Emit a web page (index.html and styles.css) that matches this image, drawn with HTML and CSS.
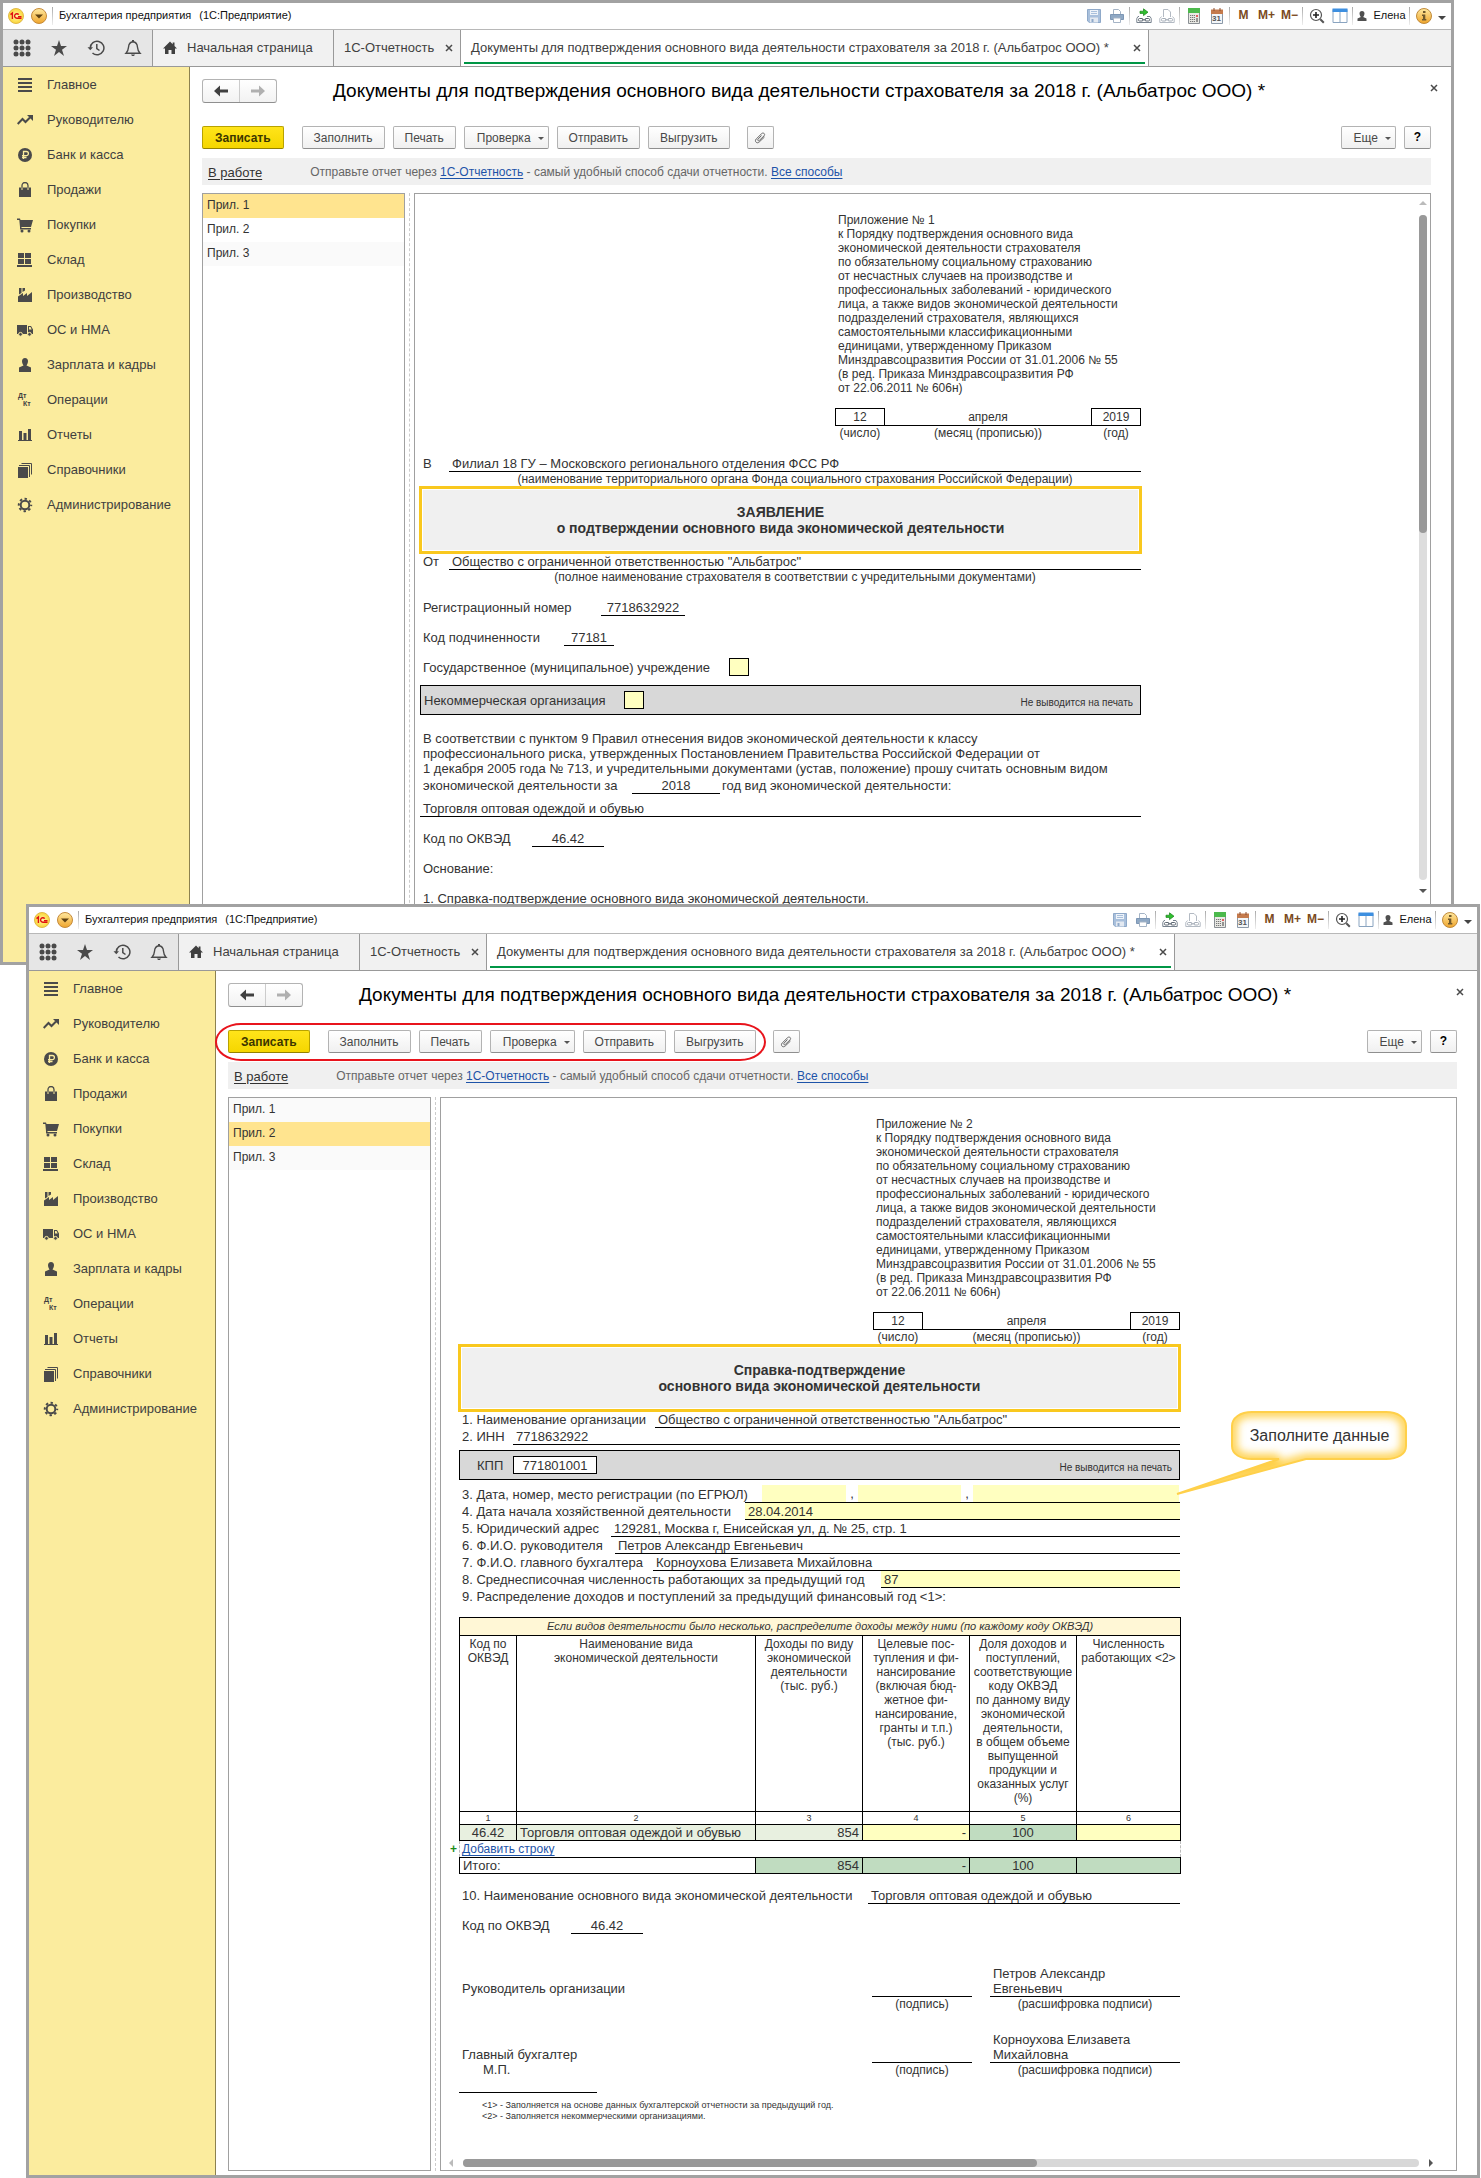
FILE: index.html
```html
<!DOCTYPE html>
<html lang="ru">
<head>
<meta charset="utf-8">
<title>Бухгалтерия предприятия</title>
<link rel="stylesheet" href="styles.css">
</head>
<body>
<svg class="sprite" aria-hidden="true">
  <defs>
    <linearGradient id="gold" x1="0" y1="0" x2="0" y2="1"><stop offset="0" stop-color="#ffe9a0"/><stop offset="1" stop-color="#efa52c"/></linearGradient>
    <radialGradient id="sun"><stop offset="0" stop-color="#fff9a8"/><stop offset="1" stop-color="#fbd536"/></radialGradient>
  </defs>
  <symbol id="i-logo" viewBox="0 0 16 16"><circle cx="8" cy="8" r="7.5" fill="url(#sun)" stroke="#e0b94a"/><path d="M2.5 6.6 4.4 5v6M10.7 6.6A2.3 2.3 0 1 0 8.9 10.3H13.5M10 8.6H13.5M8.9 10.3" fill="none" stroke="#e01010" stroke-width="1.4"/></symbol>
  <symbol id="i-drop" viewBox="0 0 16 16"><circle cx="8" cy="8" r="7.5" fill="url(#gold)" stroke="#c58a3a"/><path d="M4 6.5h8L8 10.5z" fill="#5f4212"/></symbol>
  <symbol id="i-grid" viewBox="0 0 18 18"><g fill="#4a4a4a"><circle cx="3" cy="3" r="2.5"/><circle cx="9" cy="3" r="2.5"/><circle cx="15" cy="3" r="2.5"/><circle cx="3" cy="9" r="2.5"/><circle cx="9" cy="9" r="2.5"/><circle cx="15" cy="9" r="2.5"/><circle cx="3" cy="15" r="2.5"/><circle cx="9" cy="15" r="2.5"/><circle cx="15" cy="15" r="2.5"/></g></symbol>
  <symbol id="i-star" viewBox="0 0 18 18"><path d="M9 1l2 6h6l-5 3.700 2 6.300-5-3.900-5 3.900 2-6.300L1 7h6z" fill="#4a4a4a"/></symbol>
  <symbol id="i-hist" viewBox="0 0 18 18"><path d="M3.300 9a6.800 6.800 0 1 1 2.200 5M9.800 5v4.500l2.700 2" fill="none" stroke="#4a4a4a" stroke-width="1.500"/><path d="M.5 8.300h5.500L3.300 11.300z" fill="#4a4a4a"/></symbol>
  <symbol id="i-bell" viewBox="0 0 18 18"><path d="M2 14.200c2-2 2.300-3.500 2.500-6C4.700 5 6 3 9 2.700 12 3 13.300 5 13.500 8.200c.2 2.500.5 4 2.500 6z" fill="none" stroke="#4a4a4a" stroke-width="1.400"/><path d="M8 1h2v2H8zM7 15.500h4l-1 1.500H8z" fill="#4a4a4a"/></symbol>
  <symbol id="i-home" viewBox="0 0 14 14"><path d="M7 .5 0 7.500h2V13h3.500V9h3v4H12V7.500h2L11.500 5V1.500h-1.800v1.700z" fill="#404040"/></symbol>
  <symbol id="i-x" viewBox="0 0 8 8"><path d="M1 1l6 6M7 1 1 7" stroke="#4a4a4a" stroke-width="1.500"/></symbol>
  <symbol id="i-save" viewBox="0 0 16 16"><path d="M1.500 1.500h13v13h-11l-2-1.500z" fill="#a9c0dc" stroke="#8fa9c9"/><path d="M4 2h8v5H4z" fill="#eef3f9"/><path d="M5 3.500h6M5 5.500h6" stroke="#a9c0dc"/><path d="M4 9.500h8v5H4z" fill="#e3e9f1"/><path d="M5.500 11h2v3h-2z" fill="#8fa9c9"/></symbol>
  <symbol id="i-print" viewBox="0 0 16 16"><path d="M4.500 7V1.500h5l2 2V7" fill="#fff" stroke="#a5b4c6"/><path d="M1.500 6.500h13v5h-13z" fill="#8fa8c4" stroke="#7d97b5"/><path d="M4.500 10h7v4.500h-7z" fill="#fff" stroke="#a5b4c6"/></symbol>
  <symbol id="i-link" viewBox="0 0 16 16"><path d="M4 3.200h3.500V.8L12 4.200 7.500 7.600V5.400H4z" fill="#2fc02f" stroke="#178017" stroke-width=".7"/><path d="M3 8.500H2L.8 10.500V14.500h14.400V10.500L14 8.500h-3" fill="none" stroke="#77828e"/><rect x="2.500" y="10.500" width="4.500" height="2.500" rx="1" fill="none" stroke="#5d6772"/><rect x="9" y="10.500" width="4.500" height="2.500" rx="1" fill="none" stroke="#5d6772"/><path d="M6 11.800h4" stroke="#5d6772"/></symbol>
  <symbol id="i-plink" viewBox="0 0 16 16"><path d="M4.500 9V1.500h4.500l2.500 2.500V9M2.500 8.500.8 10.500v4h14.400v-4L13.500 8.500" fill="none" stroke="#b3bac3"/><rect x="2.500" y="10.500" width="4.500" height="2.500" rx="1" fill="none" stroke="#a5adb7"/><rect x="9" y="10.500" width="4.500" height="2.500" rx="1" fill="none" stroke="#a5adb7"/><path d="M6 11.800h4" stroke="#a5adb7"/></symbol>
  <symbol id="i-calc" viewBox="0 0 16 16"><path d="M2.500.5h11v15h-11z" fill="#e9e9e4" stroke="#8a8f94"/><path d="M2 0h12v5H2z" fill="#4cb94c"/><path d="M4 7.500h5M4 9.500h5M4 11.500h5M4 13.500h5" stroke="#777" stroke-dasharray="1.300 .7"/><path d="M11 7v2" stroke="#e03030" stroke-width="1.500"/><path d="M11 10v4" stroke="#777" stroke-width="1.500"/></symbol>
  <symbol id="i-cal" viewBox="0 0 16 16"><path d="M2.500 2.500h11v13h-11z" fill="#f3f6f8" stroke="#8c99a8"/><path d="M2 1.500h12V6H2z" fill="#c47a4c"/><path d="M5 0v3M11 0v3" stroke="#8c4c2c"/></symbol>
  <symbol id="i-zoom" viewBox="0 0 16 16"><circle cx="7" cy="7" r="5.500" fill="#fff" stroke="#555" stroke-width="1.200"/><path d="M7 4v6M4 7h6" stroke="#222" stroke-width="1.600"/><path d="m11.300 11.300 3.500 3.500" stroke="#555" stroke-width="2"/></symbol>
  <symbol id="i-cols" viewBox="0 0 16 16"><path d="M1 1.500h14v13H1z" fill="#fff" stroke="#8aa4c0"/><path d="M.5.500h15V4H.5z" fill="#3d8fe0"/><path d="M8 4v10.500" stroke="#8aa4c0"/></symbol>
  <symbol id="i-user" viewBox="0 0 10 10"><path d="M5 0c1.700 0 2.500 1 2.500 2.500S6.500 5.500 6.200 6L9.500 7.500V10h-9V7.500L3.800 6C3.500 5.500 2.500 4 2.500 2.500S3.300 0 5 0z" fill="#505050"/></symbol>
  <symbol id="i-info" viewBox="0 0 16 16"><circle cx="8" cy="8" r="7.500" fill="url(#gold)" stroke="#c08a3a"/><path d="M7 3h2.500v2H7zM6 6.500h3.300V11h1v1.500H6V11h1V8H6z" fill="#70592c"/></symbol>
  <symbol id="i-caret" viewBox="0 0 8 4"><path d="M0 0h8L4 4z" fill="#444"/></symbol>
  <symbol id="i-back" viewBox="0 0 14 12"><path d="M0 6l6-5.500v4h8v3H6v4z" fill="#404040"/></symbol>
  <symbol id="i-fwd" viewBox="0 0 14 12"><path d="M14 6 8 .500v4H0v3h8v4z" fill="#b0b0b0"/></symbol>
  <symbol id="i-clip" viewBox="0 0 12 12"><path d="M7.500 3.500 4 7.200c-.9 1 .3 2.200 1.300 1.200L10 3.900c1.700-1.700-.6-3.900-2.300-2.300L2.200 7c-2.200 2.300.8 5.200 3 3L10.500 5" fill="none" stroke="#666" stroke-width="1"/></symbol>
  <symbol id="n-main" viewBox="0 0 16 16"><path d="M1 2h14M1 6h14M1 10h14M1 14h14" stroke="#4a4a4a" stroke-width="2"/></symbol>
  <symbol id="n-trend" viewBox="0 0 16 16"><path d="M.7 12 5.500 7l3 3 4.500-4.500" fill="none" stroke="#4a4a4a" stroke-width="2"/><path d="M10 3h6v6z" fill="#4a4a4a"/></symbol>
  <symbol id="n-rub" viewBox="0 0 16 16"><circle cx="8" cy="8" r="7" fill="#4a4a4a"/><path d="M6.500 12V4.500h2.800a2 2 0 0 1 0 4.200H5M5 10.500h4.500" fill="none" stroke="#fbec9e" stroke-width="1.300"/></symbol>
  <symbol id="n-bag" viewBox="0 0 16 16"><path d="M2 5.500h12V15H2z" fill="#4a4a4a"/><path d="M5 8V3.500a3 3 0 0 1 6 0V8" fill="none" stroke="#4a4a4a" stroke-width="1.300"/><path d="M5 5.500V8M11 5.500V8" stroke="#fbec9e"/></symbol>
  <symbol id="n-cart" viewBox="0 0 16 16"><path d="M0 1.500h3l.5 1.500H16l-2 7H4.500v1H14v1.500H3V10L2.300 3H0z" fill="#4a4a4a"/><circle cx="5" cy="14" r="1.500" fill="#4a4a4a"/><circle cx="12" cy="14" r="1.500" fill="#4a4a4a"/></symbol>
  <symbol id="n-store" viewBox="0 0 16 16"><path d="M1 1h6v5H1zM8 1h6v5H8zM1 7h6v5H1zM8 7h6v5H8zM0 13h15v2H0z" fill="#4a4a4a"/></symbol>
  <symbol id="n-fact" viewBox="0 0 16 16"><path d="M1 15V9.500L6 6v3l4-3v3l5-4v10zM2 1h2.500v5L2 7.500zM5.500 1H8v2.500L5.500 5z" fill="#4a4a4a"/></symbol>
  <symbol id="n-truck" viewBox="0 0 16 16"><path d="M0 3h10v9H0zM11 4h3l2 3.500V12h-5z" fill="#4a4a4a"/><path d="M12 5h1.500l1.200 2.500H12z" fill="#fbec9e"/><circle cx="3.500" cy="12.300" r="1.900" fill="#4a4a4a" stroke="#fbec9e"/><circle cx="12.500" cy="12.300" r="1.900" fill="#4a4a4a" stroke="#fbec9e"/></symbol>
  <symbol id="n-man" viewBox="0 0 16 16"><path d="M8 1c2 0 3 1.500 3 3.300S10 8 9.500 8.500l4.500 2V15H2v-4.500l4.500-2C6 8 5 6.100 5 4.300S6 1 8 1z" fill="#4a4a4a"/></symbol>
  <symbol id="n-bars" viewBox="0 0 16 16"><path d="M2 4h3v9H2zM6.500 6h3v7h-3zM11 2h3v11h-3zM1 13h14v1H1z" fill="#4a4a4a"/></symbol>
  <symbol id="n-books" viewBox="0 0 16 16"><path d="M1 5h10v11H1z" fill="#4a4a4a"/><path d="M2 3.500h10.500V15M4.500 1.500h10V12.500" fill="none" stroke="#4a4a4a"/></symbol>
  <symbol id="n-gear" viewBox="0 0 16 16"><circle cx="8" cy="8" r="4.300" fill="none" stroke="#4a4a4a" stroke-width="2"/><circle cx="8" cy="8" r="6.200" fill="none" stroke="#4a4a4a" stroke-width="2" stroke-dasharray="2.400 2.470" stroke-dashoffset="1.200"/></symbol>
</svg>

<div class="desktop">
  <section class="window window-back">
    <header class="titlebar">
      <svg class="ic16"><use href="#i-logo"/></svg>
      <svg class="ic16 drop"><use href="#i-drop"/></svg>
      <i class="sep"></i>
      <span class="app-name">Бухгалтерия предприятия</span><span>(1С:Предприятие)</span>
      <div class="sys">
        <button aria-label="Сохранить"><svg class="ic16"><use href="#i-save"/></svg></button>
        <button aria-label="Печать"><svg class="ic16"><use href="#i-print"/></svg></button>
        <i class="sep"></i>
        <button aria-label="Получить ссылку"><svg class="ic16"><use href="#i-link"/></svg></button>
        <button aria-label="Перейти по ссылке"><svg class="ic16"><use href="#i-plink"/></svg></button>
        <i class="sep"></i>
        <button aria-label="Калькулятор"><svg class="ic16"><use href="#i-calc"/></svg></button>
        <button class="cal" aria-label="Календарь"><svg class="ic16"><use href="#i-cal"/></svg><span>31</span></button>
        <i class="sep"></i>
        <button class="mem">M</button><button class="mem">M+</button><button class="mem">M−</button>
        <i class="sep"></i>
        <button aria-label="Масштаб"><svg class="ic16"><use href="#i-zoom"/></svg></button>
        <button aria-label="Панели"><svg class="ic16"><use href="#i-cols"/></svg></button>
        <i class="sep"></i>
        <button class="user"><svg class="ic10"><use href="#i-user"/></svg>Елена</button>
        <i class="sep"></i>
        <button aria-label="Справка"><svg class="ic16"><use href="#i-info"/></svg></button>
        <button class="more" aria-label="Меню"><svg><use href="#i-caret"/></svg></button>
      </div>
    </header>
    <nav class="tabs">
      <div class="quick">
        <button aria-label="Меню функций"><svg class="ic18"><use href="#i-grid"/></svg></button>
        <button aria-label="Избранное"><svg class="ic18"><use href="#i-star"/></svg></button>
        <button aria-label="История"><svg class="ic18"><use href="#i-hist"/></svg></button>
        <button aria-label="Оповещения"><svg class="ic18"><use href="#i-bell"/></svg></button>
      </div>
      <a href="#" class="tab tab-home"><svg class="ic14"><use href="#i-home"/></svg>Начальная страница</a>
      <a href="#" class="tab">1С-Отчетность<svg class="ic8"><use href="#i-x"/></svg></a>
      <a href="#" class="tab active">Документы для подтверждения основного вида деятельности страхователя за 2018 г. (Альбатрос ООО) *<svg class="ic8"><use href="#i-x"/></svg></a>
    </nav>
    <div class="body">
      <nav class="side">
        <a href="#"><svg class="ic16"><use href="#n-main"/></svg>Главное</a>
        <a href="#"><svg class="ic16"><use href="#n-trend"/></svg>Руководителю</a>
        <a href="#"><svg class="ic16"><use href="#n-rub"/></svg>Банк и касса</a>
        <a href="#"><svg class="ic16"><use href="#n-bag"/></svg>Продажи</a>
        <a href="#"><svg class="ic16"><use href="#n-cart"/></svg>Покупки</a>
        <a href="#"><svg class="ic16"><use href="#n-store"/></svg>Склад</a>
        <a href="#"><svg class="ic16"><use href="#n-fact"/></svg>Производство</a>
        <a href="#"><svg class="ic16"><use href="#n-truck"/></svg>ОС и НМА</a>
        <a href="#"><svg class="ic16"><use href="#n-man"/></svg>Зарплата и кадры</a>
        <a href="#"><span class="ops"><span>Дт</span><span>Кт</span></span>Операции</a>
        <a href="#"><svg class="ic16"><use href="#n-bars"/></svg>Отчеты</a>
        <a href="#"><svg class="ic16"><use href="#n-books"/></svg>Справочники</a>
        <a href="#"><svg class="ic16"><use href="#n-gear"/></svg>Администрирование</a>
      </nav>
      <main class="main">
        <div class="heading">
          <div class="history"><button aria-label="Назад"><svg><use href="#i-back"/></svg></button><button aria-label="Вперед"><svg><use href="#i-fwd"/></svg></button></div>
          <h1>Документы для подтверждения основного вида деятельности страхователя за 2018 г. (Альбатрос ООО) *</h1>
          <button class="close" aria-label="Закрыть"><svg class="ic8"><use href="#i-x"/></svg></button>
        </div>
        <div class="toolbar">
          <div class="actions">
            <button class="btn primary">Записать</button>
            <button class="btn">Заполнить</button>
            <button class="btn">Печать</button>
            <button class="btn menu">Проверка<i></i></button>
            <button class="btn">Отправить</button>
            <button class="btn">Выгрузить</button>
          </div>
          <button class="btn square" aria-label="Присоединенные файлы"><svg class="ic12"><use href="#i-clip"/></svg></button>
          <button class="btn menu push">Еще<i></i></button>
          <button class="btn square help">?</button>
        </div>
        <div class="notice"><a href="#" class="state">В работе</a><p>Отправьте отчет через <a href="#">1С-Отчетность</a> - самый удобный способ сдачи отчетности. <a href="#">Все способы</a></p></div>
        <div class="panes">
          <ul class="list"><li class="sel">Прил. 1</li><li>Прил. 2</li><li class="alt">Прил. 3</li></ul>
          <div class="splitter"></div>
          <div class="sheet sheet-v">
            <div class="doc">
              <div class="form">
                <div class="approval">
                  <p>Приложение № 1<br>к Порядку подтверждения основного вида<br>экономической деятельности страхователя<br>по обязательному социальному страхованию<br>от несчастных случаев на производстве и<br>профессиональных заболеваний - юридического<br>лица, а также видов экономической деятельности<br>подразделений страхователя, являющихся<br>самостоятельными классификационными<br>единицами, утвержденному Приказом<br>Минздравсоцразвития России от 31.01.2006 № 55<br>(в ред. Приказа Минздравсоцразвития РФ<br>от 22.06.2011 № 606н)</p>
                  <div class="date"><b>12</b><span>апреля</span><b>2019</b><small>(число)</small><small>(месяц (прописью))</small><small>(год)</small></div>
                </div>
                <div class="row to"><span class="l-short">В</span><span class="val">Филиал 18 ГУ – Московского регионального отделения ФСС РФ</span></div>
                <div class="hint">(наименование территориального органа Фонда социального страхования Российской Федерации)</div>
                <h2>ЗАЯВЛЕНИЕ<br>о подтверждении основного вида экономической деятельности</h2>
                <div class="row r16"><span class="l-short">От</span><span class="val">Общество с ограниченной ответственностью "Альбатрос"</span></div>
                <div class="hint">(полное наименование страхователя в соответствии с учредительными документами)</div>
                <div class="row r30 first"><span class="l-reg">Регистрационный номер</span><span class="val mid w84">7718632922</span></div>
                <div class="row r30"><span class="l-sub">Код подчиненности</span><span class="val mid w50">77181</span></div>
                <div class="row r30"><label class="l-gov" for="gov">Государственное (муниципальное) учреждение</label><input type="checkbox" id="gov"></div>
                <div class="gray"><label class="l-npo" for="npo">Некоммерческая организация</label><input type="checkbox" id="npo"><small>Не выводится на печать</small></div>
                <p class="para">В соответствии с пунктом 9 Правил отнесения видов экономической деятельности к классу<br>профессионального риска, утвержденных Постановлением Правительства Российской Федерации от<br>1 декабря 2005 года № 713, и учредительными документами (устав, положение) прошу считать основным видом</p>
                <div class="row r18"><span class="l-for">экономической деятельности за</span><span class="val mid w88">2018</span><span class="tail">год вид экономической деятельности:</span></div>
                <div class="row r23"><span class="val">Торговля оптовая одеждой и обувью</span></div>
                <div class="row r30"><span class="l-code">Код по ОКВЭД</span><span class="val mid w72">46.42</span></div>
                <div class="row r30"><span>Основание:</span></div>
                <div class="row r30"><span>1. Справка-подтверждение основного вида экономической деятельности.</span></div>
              </div>
            </div>
            <div class="vscroll"><i class="up"></i><div class="track"><div class="thumb"></div></div><i class="down"></i></div>
          </div>
        </div>
      </main>
    </div>
  </section>

  <section class="window window-front">
    <header class="titlebar">
      <svg class="ic16"><use href="#i-logo"/></svg>
      <svg class="ic16 drop"><use href="#i-drop"/></svg>
      <i class="sep"></i>
      <span class="app-name">Бухгалтерия предприятия</span><span>(1С:Предприятие)</span>
      <div class="sys">
        <button aria-label="Сохранить"><svg class="ic16"><use href="#i-save"/></svg></button>
        <button aria-label="Печать"><svg class="ic16"><use href="#i-print"/></svg></button>
        <i class="sep"></i>
        <button aria-label="Получить ссылку"><svg class="ic16"><use href="#i-link"/></svg></button>
        <button aria-label="Перейти по ссылке"><svg class="ic16"><use href="#i-plink"/></svg></button>
        <i class="sep"></i>
        <button aria-label="Калькулятор"><svg class="ic16"><use href="#i-calc"/></svg></button>
        <button class="cal" aria-label="Календарь"><svg class="ic16"><use href="#i-cal"/></svg><span>31</span></button>
        <i class="sep"></i>
        <button class="mem">M</button><button class="mem">M+</button><button class="mem">M−</button>
        <i class="sep"></i>
        <button aria-label="Масштаб"><svg class="ic16"><use href="#i-zoom"/></svg></button>
        <button aria-label="Панели"><svg class="ic16"><use href="#i-cols"/></svg></button>
        <i class="sep"></i>
        <button class="user"><svg class="ic10"><use href="#i-user"/></svg>Елена</button>
        <i class="sep"></i>
        <button aria-label="Справка"><svg class="ic16"><use href="#i-info"/></svg></button>
        <button class="more" aria-label="Меню"><svg><use href="#i-caret"/></svg></button>
      </div>
    </header>
    <nav class="tabs">
      <div class="quick">
        <button aria-label="Меню функций"><svg class="ic18"><use href="#i-grid"/></svg></button>
        <button aria-label="Избранное"><svg class="ic18"><use href="#i-star"/></svg></button>
        <button aria-label="История"><svg class="ic18"><use href="#i-hist"/></svg></button>
        <button aria-label="Оповещения"><svg class="ic18"><use href="#i-bell"/></svg></button>
      </div>
      <a href="#" class="tab tab-home"><svg class="ic14"><use href="#i-home"/></svg>Начальная страница</a>
      <a href="#" class="tab">1С-Отчетность<svg class="ic8"><use href="#i-x"/></svg></a>
      <a href="#" class="tab active">Документы для подтверждения основного вида деятельности страхователя за 2018 г. (Альбатрос ООО) *<svg class="ic8"><use href="#i-x"/></svg></a>
    </nav>
    <div class="body">
      <nav class="side">
        <a href="#"><svg class="ic16"><use href="#n-main"/></svg>Главное</a>
        <a href="#"><svg class="ic16"><use href="#n-trend"/></svg>Руководителю</a>
        <a href="#"><svg class="ic16"><use href="#n-rub"/></svg>Банк и касса</a>
        <a href="#"><svg class="ic16"><use href="#n-bag"/></svg>Продажи</a>
        <a href="#"><svg class="ic16"><use href="#n-cart"/></svg>Покупки</a>
        <a href="#"><svg class="ic16"><use href="#n-store"/></svg>Склад</a>
        <a href="#"><svg class="ic16"><use href="#n-fact"/></svg>Производство</a>
        <a href="#"><svg class="ic16"><use href="#n-truck"/></svg>ОС и НМА</a>
        <a href="#"><svg class="ic16"><use href="#n-man"/></svg>Зарплата и кадры</a>
        <a href="#"><span class="ops"><span>Дт</span><span>Кт</span></span>Операции</a>
        <a href="#"><svg class="ic16"><use href="#n-bars"/></svg>Отчеты</a>
        <a href="#"><svg class="ic16"><use href="#n-books"/></svg>Справочники</a>
        <a href="#"><svg class="ic16"><use href="#n-gear"/></svg>Администрирование</a>
      </nav>
      <main class="main">
        <div class="heading">
          <div class="history"><button aria-label="Назад"><svg><use href="#i-back"/></svg></button><button aria-label="Вперед"><svg><use href="#i-fwd"/></svg></button></div>
          <h1>Документы для подтверждения основного вида деятельности страхователя за 2018 г. (Альбатрос ООО) *</h1>
          <button class="close" aria-label="Закрыть"><svg class="ic8"><use href="#i-x"/></svg></button>
        </div>
        <div class="toolbar">
          <div class="actions marked">
            <button class="btn primary">Записать</button>
            <button class="btn">Заполнить</button>
            <button class="btn">Печать</button>
            <button class="btn menu">Проверка<i></i></button>
            <button class="btn">Отправить</button>
            <button class="btn">Выгрузить</button>
          </div>
          <button class="btn square" aria-label="Присоединенные файлы"><svg class="ic12"><use href="#i-clip"/></svg></button>
          <button class="btn menu push">Еще<i></i></button>
          <button class="btn square help">?</button>
        </div>
        <div class="notice"><a href="#" class="state">В работе</a><p>Отправьте отчет через <a href="#">1С-Отчетность</a> - самый удобный способ сдачи отчетности. <a href="#">Все способы</a></p></div>
        <div class="panes">
          <ul class="list"><li class="alt">Прил. 1</li><li class="sel">Прил. 2</li><li class="alt">Прил. 3</li></ul>
          <div class="splitter"></div>
          <div class="sheet sheet-h">
            <div class="doc wide">
              <div class="form">
                <div class="approval">
                  <p>Приложение № 2<br>к Порядку подтверждения основного вида<br>экономической деятельности страхователя<br>по обязательному социальному страхованию<br>от несчастных случаев на производстве и<br>профессиональных заболеваний - юридического<br>лица, а также видов экономической деятельности<br>подразделений страхователя, являющихся<br>самостоятельными классификационными<br>единицами, утвержденному Приказом<br>Минздравсоцразвития России от 31.01.2006 № 55<br>(в ред. Приказа Минздравсоцразвития РФ<br>от 22.06.2011 № 606н)</p>
                  <div class="date"><b>12</b><span>апреля</span><b>2019</b><small>(число)</small><small>(месяц (прописью))</small><small>(год)</small></div>
                </div>
                <div class="titled">
                  <h2>Справка-подтверждение<br>основного вида экономической деятельности</h2>
                </div>
                <div class="row r16"><span class="l-name">1. Наименование организации</span><span class="val">Общество с ограниченной ответственностью "Альбатрос"</span></div>
                <div class="row r17"><span class="l-inn">2. ИНН</span><span class="val">7718632922</span></div>
                <div class="gray kpp"><span class="l-kpp">КПП</span><span class="box">771801001</span><small>Не выводится на печать</small></div>
                <div class="row r18 reg"><span class="l-date">3. Дата, номер, место регистрации (по ЕГРЮЛ)</span><span class="val parts"><input type="text" class="p1" aria-label="Дата регистрации"><i>,</i><input type="text" class="p2" aria-label="Номер регистрации"><i>,</i><input type="text" class="p3" aria-label="Место регистрации"></span></div>
                <div class="row r17"><label class="l-date" for="start">4. Дата начала хозяйственной деятельности</label><input type="text" class="val fill" id="start" value="28.04.2014"></div>
                <div class="row r17"><span class="l-addr">5. Юридический адрес</span><span class="val">129281, Москва г, Енисейская ул, д. № 25, стр. 1</span></div>
                <div class="row r17"><span class="l-head">6. Ф.И.О. руководителя</span><span class="val">Петров Александр Евгеньевич</span></div>
                <div class="row r17"><span class="l-acc">7. Ф.И.О. главного бухгалтера</span><span class="val">Корноухова Елизавета Михайловна</span></div>
                <div class="row r17"><label class="l-staff" for="staff">8. Среднесписочная численность работающих за предыдущий год</label><input type="text" class="val fill" id="staff" value="87"></div>
                <div class="row r17"><span>9. Распределение доходов и поступлений за предыдущий финансовый год &lt;1&gt;:</span></div>
                <table>
                  <colgroup><col class="c1"><col class="c2"><col class="c3"><col class="c3"><col class="c3"><col class="c4"></colgroup>
                  <thead>
                    <tr class="note"><th colspan="6">Если видов деятельности было несколько, распределите доходы между ними (по каждому коду ОКВЭД)</th></tr>
                    <tr class="heads"><th>Код по<br>ОКВЭД</th><th>Наименование вида<br>экономической деятельности</th><th>Доходы по виду<br>экономической<br>деятельности<br>(тыс. руб.)</th><th>Целевые пос-<br>тупления и фи-<br>нансирование<br>(включая бюд-<br>жетное фи-<br>нансирование,<br>гранты и т.п.)<br>(тыс. руб.)</th><th>Доля доходов и<br>поступлений,<br>соответствующие<br>коду ОКВЭД<br>по данному виду<br>экономической<br>деятельности,<br>в общем объеме<br>выпущенной<br>продукции и<br>оказанных услуг<br>(%)</th><th>Численность<br>работающих &lt;2&gt;</th></tr>
                    <tr class="nums"><th>1</th><th>2</th><th>3</th><th>4</th><th>5</th><th>6</th></tr>
                  </thead>
                  <tbody>
                    <tr class="data"><td class="pale ctr">46.42</td><td class="pale">Торговля оптовая одеждой и обувью</td><td class="pale end">854</td><td class="yel end">-</td><td class="grn ctr">100</td><td class="yel"></td></tr>
                    <tr class="add"><td colspan="6"><i>+</i><a href="#">Добавить строку</a></td></tr>
                    <tr class="data"><td colspan="2">Итого:</td><td class="grn end">854</td><td class="grn end">-</td><td class="grn ctr">100</td><td class="grn"></td></tr>
                  </tbody>
                </table>
                <div class="row r30"><span class="l-kind">10. Наименование основного вида экономической деятельности</span><span class="val">Торговля оптовая одеждой и обувью</span></div>
                <div class="row r30"><span class="l-code">Код по ОКВЭД</span><span class="val mid w72">46.42</span></div>
                <div class="sign">
                  <span class="who">Руководитель организации</span><span class="line"></span><span class="line name">Петров Александр<br>Евгеньевич</span>
                  <span></span><small>(подпись)</small><small>(расшифровка подписи)</small>
                </div>
                <div class="sign">
                  <span class="who">Главный бухгалтер</span><span class="line"></span><span class="line name">Корноухова Елизавета<br>Михайловна</span>
                  <span class="seal">М.П.</span><small>(подпись)</small><small>(расшифровка подписи)</small>
                </div>
                <div class="foot"></div>
                <p class="notes">&lt;1&gt; - Заполняется на основе данных бухгалтерской отчетности за предыдущий год.<br>&lt;2&gt; - Заполняется некоммерческими организациями.</p>
              </div>
            </div>
            <div class="hscroll"><i class="left"></i><div class="track"><div class="thumb"></div></div><i class="right"></i></div>
            <div class="callout">
              <svg viewBox="0 0 232 86" aria-hidden="true">
                <defs><filter id="soft" x="-10%" y="-20%" width="120%" height="140%"><feGaussianBlur stdDeviation="4"/></filter>
                <clipPath id="bub"><path d="M76 1h134c12 0 20 6 20 14v20c0 8-8 13-20 13H130L1 83 103 48H76c-12 0-20-5-20-13V15C56 7 64 1 76 1z"/></clipPath></defs>
                <g clip-path="url(#bub)"><path d="M0 0h232v86H0z" fill="#fff"/><path d="M76 1h134c12 0 20 6 20 14v20c0 8-8 13-20 13H130L1 83 103 48H76c-12 0-20-5-20-13V15C56 7 64 1 76 1z" fill="none" stroke="#ffd04a" stroke-width="10" filter="url(#soft)"/></g>
                <path d="M76 1h134c12 0 20 6 20 14v20c0 8-8 13-20 13H130L1 83 103 48H76c-12 0-20-5-20-13V15C56 7 64 1 76 1z" fill="none" stroke="#ffd04a" stroke-width="2"/>
              </svg>
              <span>Заполните данные</span>
            </div>
          </div>
        </div>
      </main>
    </div>
  </section>
</div>
</body>
</html>
```
FILE: styles.css
```css
* { box-sizing: border-box; }
body { margin: 0; background: #fff; color: #333; font: 13px/17px "Liberation Sans", Arial, sans-serif; }
button { margin: 0; padding: 0; border: 0; background: none; color: inherit; font: inherit; cursor: pointer; }
a { color: inherit; text-decoration: none; }
p, h1, h2, ul { margin: 0; padding: 0; }
svg { display: block; flex: none; }
.sprite { position: absolute; width: 0; height: 0; }
.ic8 { width: 8px; height: 8px; }
.ic10 { width: 10px; height: 10px; }
.ic12 { width: 12px; height: 12px; }
.ic14 { width: 14px; height: 14px; }
.ic16 { width: 16px; height: 16px; }
.ic18 { width: 18px; height: 18px; }

/* Windows */
.desktop { position: relative; padding: 904px 1px 0 26px; }
.window { display: flex; flex-direction: column; border: 3px solid #a2a2a2; background: #fff; white-space: nowrap; }
.window-back { position: absolute; top: 0; left: 0; right: 27px; height: 965px; overflow: hidden; }
.window-front { position: relative; }

.titlebar { display: flex; align-items: center; flex: none; height: 27px; padding: 0 2px 1px 5px; border-bottom: 1px solid #b8b8b8; color: #111; font-size: 11px; }
.drop { margin-left: 7px; }
.sep { flex: none; width: 1px; height: 18px; margin: 0 2px 0 1px; background: linear-gradient(#aaa, #eee); }
.drop + .sep { margin: 0 6px 0 5px; }
.app-name { margin-right: 8px; }
.sys { display: flex; align-items: center; margin-left: auto; }
.sys button { display: flex; justify-content: center; align-items: center; width: 23px; height: 20px; }
.sys .mem { color: #7a4a22; font-weight: bold; font-size: 12px; }
.sys .user { gap: 6px; width: 53px; }
.sys .more { width: 14px; padding-top: 5px; }
.more svg { width: 8px; height: 4px; }
.sys .cal { position: relative; }
.cal span { position: absolute; top: 8px; left: 0; width: 23px; color: #555; font-weight: bold; font-size: 8px; line-height: 9px; text-align: center; }

.tabs { display: flex; flex: none; height: 37px; border-bottom: 1px solid #999; background: #f1f1f1; }
.quick { display: flex; align-items: center; gap: 19px; padding: 0 10px; border-right: 1px solid #999; background: #e6e6e6; }
.tab { display: flex; align-items: center; justify-content: space-between; min-width: 127px; padding: 0 7px 1px 10px; border-right: 1px solid #999; color: #404040; }
.tab-home { justify-content: flex-start; gap: 10px; min-width: 181px; }
.tab.active { min-width: 688px; background: linear-gradient(#009646, #009646) 3px 32px / calc(100% - 6px) 2px no-repeat #fff; }

.body { display: flex; flex: 1; }
.side { flex: none; width: 187px; border-right: 1px solid #8c8250; background: #fbec9e; }
.side a { display: flex; align-items: center; gap: 14px; height: 35px; padding-left: 14px; color: #404040; }
.ops { display: flex; flex-direction: column; width: 16px; font-weight: bold; font-size: 7px; line-height: 8px; }
.ops span { padding-left: 1px; }
.ops span + span { padding-left: 6px; }

.main { display: flex; flex: 1; flex-direction: column; min-width: 0; padding: 12px 20px 4px 12px; }
.heading { display: flex; align-items: center; height: 24px; margin-right: -8px; }
.history { display: flex; border: 1px solid #b3b3b3; border-bottom-color: #8f8f8f; border-radius: 3px; background: linear-gradient(#fff, #f2f2f2); }
.history button { display: flex; justify-content: center; align-items: center; width: 36px; height: 22px; }
.history button + button { width: 37px; border-left: 1px solid #ccc; }
.history svg { width: 14px; height: 12px; }
h1 { margin-left: 56px; color: #000; font-weight: normal; font-size: 19px; line-height: 24px; }
.close { margin: 0 1px 6px auto; }

.toolbar { display: flex; gap: 8px; margin-top: 23px; }
.actions { display: flex; gap: 8px; position: relative; margin-right: 9px; }
.marked::after { content: ""; position: absolute; inset: -7px -10px -8px -13px; border: 2px solid #e8141c; border-radius: 26px / 19px; pointer-events: none; }
.btn { display: flex; justify-content: center; align-items: center; height: 23px; padding: 1px 11px 0; border: 1px solid #b3b3b3; border-bottom-color: #8f8f8f; border-radius: 2px; background: linear-gradient(#fff, #f0f0f0); color: #484848; font-size: 12px; }
.primary { margin-right: 10px; padding: 1px 12px 0; border-color: #b8a200; border-bottom-color: #948200; background: linear-gradient(#ffe41a, #f5d600); color: #3c3600; font-weight: bold; }
.menu { gap: 7px; padding: 1px 4px 0 12px; }
.menu i { border: 3px solid transparent; border-top-color: #555; border-bottom: 0; }
.square { width: 27px; padding: 0; }
.help { color: #000; font-weight: bold; }
.push { margin-left: auto; }

.notice { display: flex; align-items: center; gap: 48px; height: 27px; margin-top: 9px; padding: 2px 0 0 6px; background: #f0f0f0; color: #666; font-size: 12px; }
.notice .state { color: #333; font-size: 13px; text-decoration: underline; text-underline-offset: 2px; }
.notice p a, .add a { color: #1d53a8; text-decoration: underline; text-underline-offset: 2px; }

.panes { display: flex; flex: 1; margin-top: 8px; }
.list { flex: none; width: 203px; border: 1px solid #a0a0a0; list-style: none; font-size: 12px; }
.list li { height: 24px; padding: 3px 4px; }
.list .sel { background: #ffe48f; }
.list .alt { background: #fafafa; }
.splitter { flex: none; width: 5px; margin-right: 4px; border-right: 1px dashed #ccc; }
.sheet { display: flex; flex: 1; min-width: 0; position: relative; border: 1px solid #a0a0a0; color: #333; }
.sheet-h { flex-direction: column; }
.doc { flex: 1; padding-left: 5px; }
.doc.wide { padding-left: 18px; }
.form { max-width: 721px; padding-top: 19px; }

/* Scrollbars */
.vscroll { display: flex; flex-direction: column; align-items: center; width: 15px; height: 706px; padding: 7px 0; }
.vscroll .track { flex: 1; width: 8px; margin: 10px 0 9px; border-radius: 4px; background: #ddd; }
.vscroll .thumb { height: 318px; border-radius: 4px; background: #999; }
.up { border: 4px solid transparent; border-bottom-color: #bbb; border-top: 0; }
.down { border: 4px solid transparent; border-top-color: #555; border-bottom: 0; }
.hscroll { display: flex; align-items: center; height: 15px; padding: 0 23px 0 8px; }
.hscroll .track { flex: 1; height: 8px; margin: 0 10px; border-radius: 4px; background: #d8d8d8; }
.hscroll .thumb { width: 60%; height: 8px; border-radius: 4px; background: #999; }
.left { border: 4px solid transparent; border-right-color: #bbb; border-left: 0; }
.right { border: 4px solid transparent; border-left-color: #555; border-right: 0; }

/* Printed form */
.approval { width: 306px; margin: 0 0 15px auto; font-size: 12px; line-height: 14px; }
.wide .approval { width: 307px; }
.approval p { padding-left: 3px; }
.date { display: grid; grid-template-columns: 50px 1fr 50px; grid-template-rows: 18px 14px; margin-top: 13px; text-align: center; }
.date b, .date span { border: 1px solid #000; font-weight: normal; line-height: 17px; }
.date span { border-width: 0 0 1px; line-height: 19px; }
small { font-size: 12px; line-height: 14px; text-align: center; }
.row { display: flex; align-items: flex-end; }
.row > span:first-child, .row > label:first-child { flex: none; padding-left: 3px; }
.row > .val, .row > .val:first-child { flex: 1; height: 17px; margin: 0; padding: 0 0 0 3px; border: 0; border-bottom: 1px solid #000; border-radius: 0; background: none; color: inherit; font: inherit; line-height: 17px; }
.r16 { height: 16px; }
.r16 > span:first-child { line-height: 16px; }
.row.r16 > .val { height: 16px; line-height: 16px; }
.to, .r17 { height: 17px; }
.r18 { height: 18px; }
.r23 { height: 23px; }
.r30 { height: 30px; }
.first { margin-top: 2px; }
.row > .mid { flex: none; padding: 0; text-align: center; }
.w50 { width: 50px; }
.w72 { width: 72px; }
.w84 { width: 84px; }
.w88 { width: 88px; }
.tail { padding-left: 2px; }
.row > .fill { background: #ffffc0; }
.l-short { width: 29px; }
.l-reg { width: 181px; }
.l-sub { width: 144px; }
.l-gov { width: 309px; }
.l-npo { width: 200px; }
.l-for { width: 212px; }
.l-code { width: 112px; }
.l-name { width: 196px; }
.l-acc { width: 194px; }
.l-inn { width: 54px; }
.l-date { width: 286px; }
.l-addr { width: 152px; }
.l-head { width: 156px; }
.l-staff { width: 422px; }
.l-kind { width: 409px; }
.l-kpp { width: 53px; padding-left: 17px; }
.hint { padding-left: 29px; font-size: 12px; line-height: 14px; text-align: center; }
h2 { display: flex; align-items: center; justify-content: center; height: 68px; margin: 0 -1px; border: 3px solid #f9c81e; background: #f0f0f0; box-shadow: inset 0 0 0 1px #fff; font-size: 14px; line-height: 16px; text-align: center; }
input[type="checkbox"] { appearance: none; width: 20px; height: 18px; margin: 0; border: 1px solid #000; border-radius: 0; background: #ffffc0; }
.gray { display: flex; align-items: center; height: 30px; margin-top: 9px; padding: 0 7px 0 3px; border: 1px solid #000; background: #d8d8d8; }
.gray small { margin-left: auto; padding-top: 5px; font-size: 10px; }
.kpp { margin-top: 5px; padding-left: 0; }
.box { width: 84px; height: 18px; border: 1px solid #000; background: #fff; line-height: 17px; text-align: center; }
.para { margin-top: 16px; padding-left: 3px; line-height: 15px; }
.titled { margin-top: -15px; }
.reg { margin-top: 5px; }
.row > .parts { display: flex; height: 18px; padding: 0 1px 0 17px; }
.parts input { width: 84px; height: 17px; padding: 0; border: 0; background: #ffffc0; font: inherit; }
.parts i { width: 12px; font-style: normal; text-align: center; }
.parts .p2 { width: 103px; }
.parts .p3 { flex: 1; min-width: 0; }

table { width: 100%; margin-top: 12px; border-collapse: collapse; table-layout: fixed; }
.c1 { width: 57px; }
.c2 { width: 239px; }
.c3 { width: 107px; }
.c4 { width: 104px; }
th, td { padding: 0; border: 1px solid #000; font-weight: normal; }
.note th { height: 18px; background: #fff7d6; font-size: 11px; font-style: italic; line-height: 17px; }
.heads th { height: 176px; padding-top: 1px; font-size: 12px; line-height: 14px; vertical-align: top; }
.nums th { height: 13px; font-size: 9px; line-height: 12px; }
.data td { height: 16px; padding: 0 3px; line-height: 15px; }
.add td { height: 17px; padding: 0 2px; position: relative; border-left: 1px dashed #bbb; border-right: 1px dashed #bbb; font-size: 12px; line-height: 16px; }
.add i { position: absolute; left: -10px; color: #1a8a1a; font-style: normal; font-weight: bold; }
.data .ctr { text-align: center; }
.data .end { text-align: right; }
.pale { background: #e8f0e0; }
.yel { background: #ffffc0; }
.grn { background: #c0dcc0; }

.sign { display: grid; grid-template-columns: 1fr 100px 190px; grid-template-rows: 31px 14px; column-gap: 18px; align-items: end; margin: 32px 0 21px; line-height: 15px; }
.sign + .sign { margin: 0; }
.who { padding: 0 0 1px 3px; }
.line { height: 31px; border-bottom: 1px solid #000; }
.name { padding-left: 3px; }
.seal { padding-left: 24px; }
.foot { width: 138px; margin-top: 15px; border-top: 1px solid #000; }
.notes { padding: 7px 0 33px 23px; font-size: 9px; line-height: 11px; }

.callout { position: absolute; top: 313px; left: 735px; width: 232px; }
.callout svg { width: 232px; height: 86px; }
.callout span { position: absolute; top: 15px; left: 56px; width: 175px; font-size: 16px; line-height: 20px; text-align: center; }
```
